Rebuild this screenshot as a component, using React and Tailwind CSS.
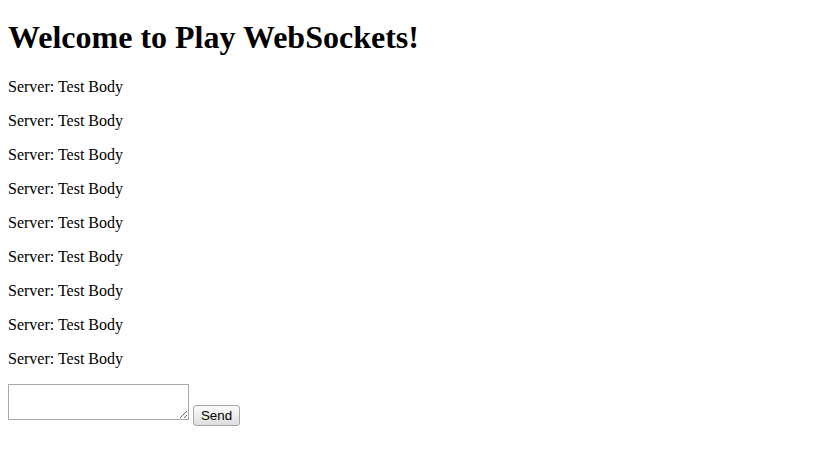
export default function App() {
  const messages = Array.from({ length: 9 }, () => 'Server: Test Body')

  return (
    <div className="min-h-[475px] bg-white p-2 font-['Liberation_Serif',serif] text-base text-black">
      <h1 className="mt-[11px] mb-[22px] text-[32px] leading-[37px] font-bold">
        Welcome to Play WebSockets!
      </h1>
      <div className="flex flex-col gap-4">
        {messages.map((m, i) => (
          <p key={i} className="leading-[18px]">
            {m}
          </p>
        ))}
      </div>
      <form className="mt-4 flex items-start" onSubmit={(e) => e.preventDefault()}>
        <textarea className="h-[36px] w-[181px] border border-[#a9a9a9] bg-white p-[2px] font-['Liberation_Mono',monospace] text-[13.33px] outline-none" />
        <button
          type="submit"
          className="mt-[21px] ml-1 flex h-[21px] w-[47px] items-center justify-center rounded-[3px] border border-[#a6a6a6] bg-gradient-to-b from-[#fbfbfb] to-[#dedede] px-[6px] font-['Liberation_Sans',sans-serif] text-[13.33px] leading-none text-black"
        >
          Send
        </button>
      </form>
    </div>
  )
}
